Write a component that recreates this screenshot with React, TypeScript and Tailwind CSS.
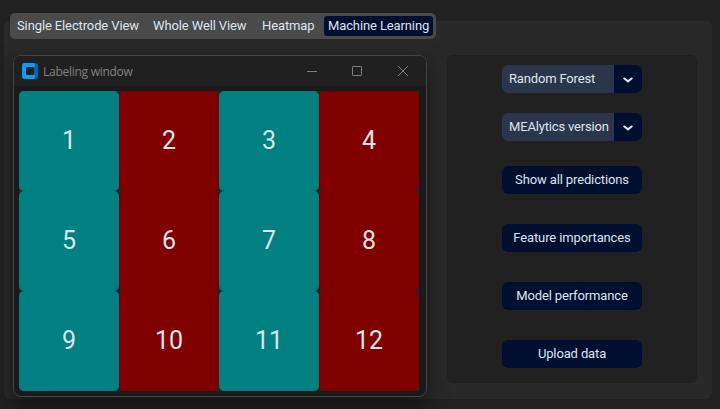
import React from 'react';

const tabs = [
  { label: 'Single Electrode View', style: 'w-[136px]' },
  { label: 'Whole Well View', style: 'w-[109px]' },
  { label: 'Heatmap', style: 'w-[66px]' },
  { label: 'Machine Learning', style: 'w-[109px] bg-[#000f30]' },
];

const wells = [1, 2, 3, 4, 5, 6, 7, 8, 9, 10, 11, 12];

function Tabs() {
  return (
    <nav className="-mt-2 ml-1.5 flex h-[26px] w-[426px] items-center rounded-[5px] bg-[#4a4a4a] pl-[3px]">
      {tabs.map((t) => (
        <button
          key={t.label}
          className={`flex h-5 shrink-0 items-center whitespace-nowrap rounded-[3px] pl-1 tracking-[-0.12px] ${t.style}`}
        >
          {t.label}
        </button>
      ))}
    </nav>
  );
}

function TitleBar() {
  return (
    <header className="flex h-[30px] shrink-0 items-center bg-[#202020] pl-2 text-[#808080]">
      <svg width="16" height="16" viewBox="0 0 16 16" className="shrink-0">
        <rect width="16" height="16" rx="3" fill="#0263b5" />
        <path d="M3 0h8.5A2.5 2.5 0 0 1 13 3v10a2.5 2.5 0 0 1-1.5 3H3a3 3 0 0 1-3-3V3a3 3 0 0 1 3-3Z" fill="#0a9bff" />
        <path d="M12 4h1v8h-1z" fill="#0263b5" />
        <rect x="4" y="4" width="8" height="8" rx="1.5" fill="#202020" />
      </svg>
      <span className="ml-[5px] w-[264px] whitespace-nowrap pt-px font-['Open_Sans',sans-serif] text-[12px] tracking-[-0.27px]">
        Labeling window
      </span>
      <svg width="104" height="12" viewBox="0 0 104 12" fill="none" stroke="currentColor" className="shrink-0">
        <path d="M0 6.5h10" />
        <rect x="45.5" y="1.5" width="9" height="9" rx="0.6" />
        <path d="m91 1 10 10M101 1 91 11" />
      </svg>
    </header>
  );
}

function LabelingWindow() {
  return (
    <section className="ml-[9px] flex h-[342px] w-[414px] flex-col overflow-hidden rounded-lg border border-[#424345] bg-[#1a1a1a] shadow-[0_8px_20px_rgba(0,0,0,0.5)]">
      <TitleBar />
      <div className="ml-[5px] mt-[5px] grid w-[400px] grid-cols-4 bg-[#242424]">
        {wells.map((n) => (
          <button
            key={n}
            className={`flex h-[100px] items-center justify-center rounded-[5px] text-[25px] text-[#dce4ee] ${
              n % 2 ? 'bg-[#008080]' : 'bg-[#800000]'
            }`}
          >
            {n}
          </button>
        ))}
      </div>
    </section>
  );
}

function Dropdown({ label }: { label: string }) {
  return (
    <button className="flex h-7 w-[140px] shrink-0 items-center overflow-hidden rounded-md bg-[#2b364a]">
      <span className="w-28 whitespace-nowrap pl-[7px] text-left tracking-[-0.17px]">{label}</span>
      <span className="flex h-full w-7 items-center justify-center bg-[#000f30]">
        <svg width="10" height="6" viewBox="0 0 10 6" fill="none" stroke="#dce4ee" strokeWidth="2.1" strokeLinecap="round" strokeLinejoin="round" className="mt-px">
          <path d="M1.4 1.5 5 4.3l3.6-2.8" />
        </svg>
      </span>
    </button>
  );
}

function Action({ label }: { label: string }) {
  return (
    <button className="flex h-7 w-[140px] shrink-0 items-center justify-center whitespace-nowrap rounded-md bg-[#000f30] tracking-[-0.13px]">
      {label}
    </button>
  );
}

export default function App() {
  return (
    <main className="h-[409px] w-[720px] overflow-hidden bg-[#212121] pl-1 pt-[21px] font-[Roboto,sans-serif] text-[13px] leading-4 text-[#dce4ee]">
      <div className="flex h-[378px] w-[708px] flex-col rounded-md bg-[#292929]">
        <Tabs />
        <div className="mt-4 flex">
          <LabelingWindow />
          <aside className="ml-5 flex h-[328px] w-[250px] flex-col items-center rounded-md bg-[#212121] pt-2.5">
            <div className="flex flex-col gap-5">
              <Dropdown label="Random Forest" />
              <Dropdown label="MEAlytics version" />
            </div>
            <div className="mt-[25px] flex flex-col gap-[30px]">
              <Action label="Show all predictions" />
              <Action label="Feature importances" />
              <Action label="Model performance" />
              <Action label="Upload data" />
            </div>
          </aside>
        </div>
      </div>
    </main>
  );
}
